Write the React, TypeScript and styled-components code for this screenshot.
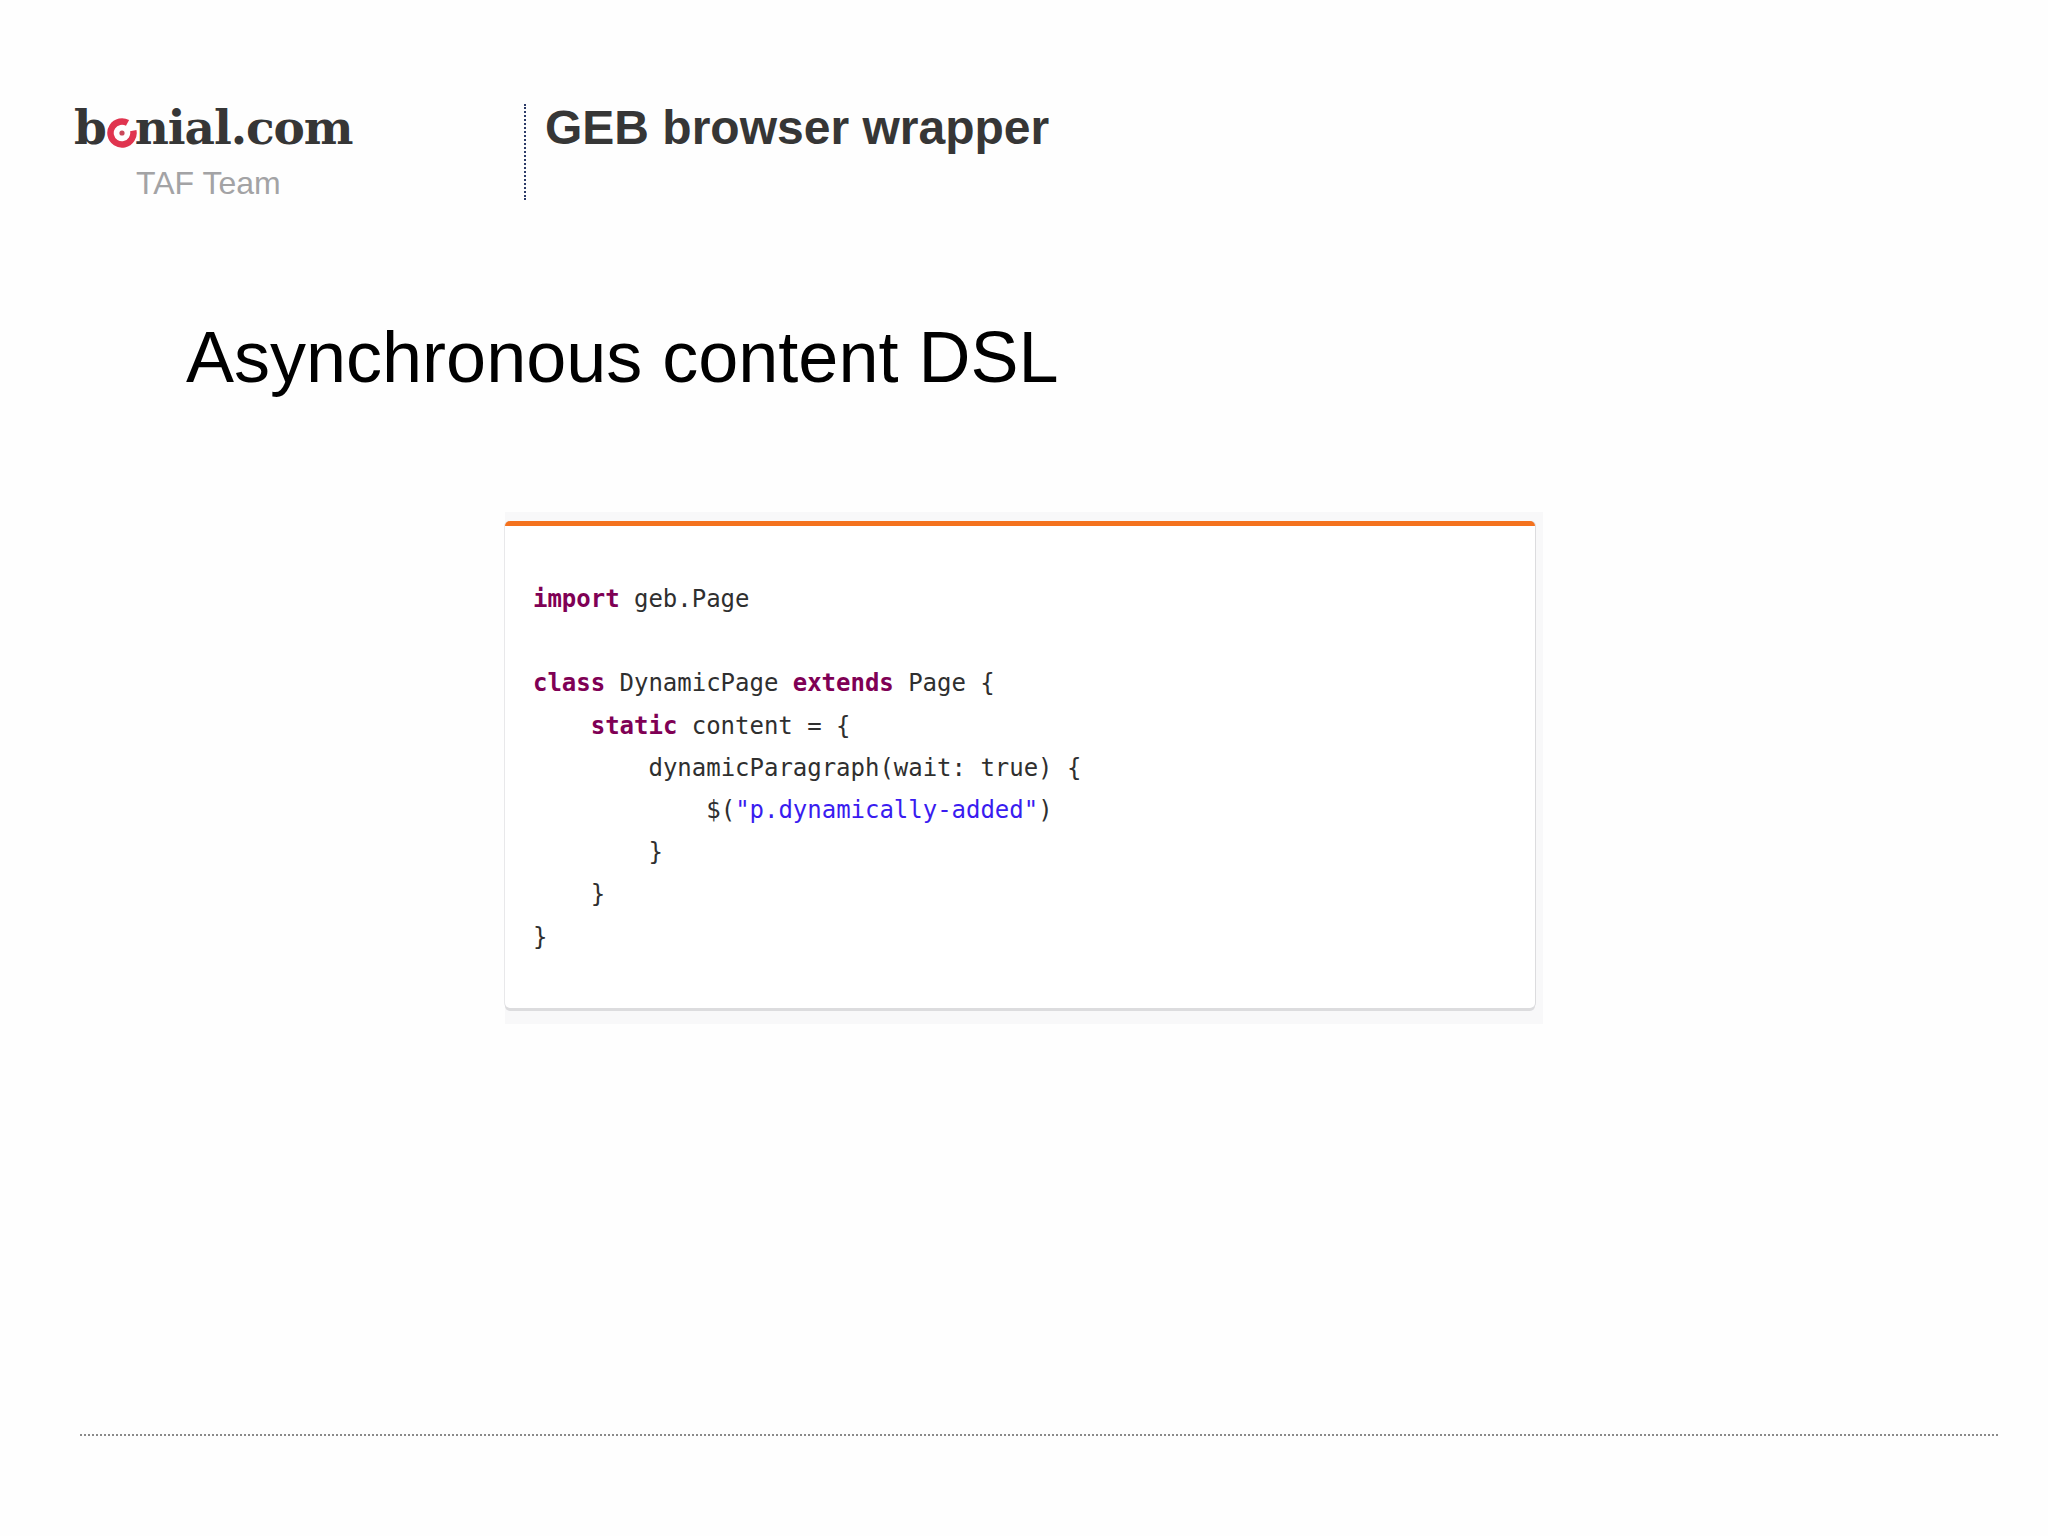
import styled, { createGlobalStyle } from 'styled-components'

const GlobalStyle = createGlobalStyle`
  html, body {
    margin: 0;
    padding: 0;
    background: #fefefe;
  }
`

const Slide = styled.div`
  width: 2048px;
  height: 1536px;
  display: flex;
  flex-direction: column;
  overflow: hidden;
  font-family: "Liberation Sans", Arial, sans-serif;
`

const Header = styled.header`
  display: flex;
  height: 96px;
  margin-top: 104px;
  padding-left: 74px;
`

const Brand = styled.div`
  width: 450px;
  flex: none;
  display: flex;
  flex-direction: column;
`

const Logo = styled.div`
  display: flex;
  align-items: baseline;
  height: 48px;
  font-family: "DejaVu Serif", serif;
  font-weight: 700;
  font-size: 47px;
  line-height: 48px;
  letter-spacing: -1.1px;
  color: #363636;
`

const LogoMark = styled.svg`
  width: 30px;
  height: 30px;
  margin: 0 -2px 4px 1px;
  align-self: flex-end;
  flex: none;
`

const Team = styled.div`
  margin: 13px 0 0 62px;
  font-size: 32px;
  line-height: 36px;
  color: #a3a3a5;
`

const DeckTitle = styled.h2`
  margin: 0;
  padding: 1px 0 0 19px;
  height: 100%;
  box-sizing: border-box;
  border-left: 2px dotted #2b3a67;
  font-size: 48px;
  line-height: 46px;
  font-weight: 700;
  color: #363636;
`

const Heading = styled.h1`
  margin: 115px 0 0 186px;
  font-size: 72px;
  line-height: 84px;
  font-weight: 400;
  color: #000;
`

const CodeHalo = styled.div`
  align-self: flex-start;
  margin: 113px 0 0 505px;
  padding: 9px 8px 16px 0;
  background: #f8f8f9;
`

const CodeCard = styled.div`
  width: 1030px;
  height: 487px;
  box-sizing: border-box;
  padding: 52px 0 0 28px;
  background: #fff;
  border-top: 5px solid #f4721e;
  border-radius: 5px;
  box-shadow: 1px 0 0 #dcdcde, 0 3px 0 #dcdcde, -1px 0 0 #e8e8ea;
`

const Code = styled.div`
  font-family: "DejaVu Sans Mono", "Liberation Mono", monospace;
  font-size: 24px;
  line-height: 42.2px;
  letter-spacing: -0.02px;
  color: #2f2f2f;
`

const CodeLine = styled.div<{ $indent?: number }>`
  height: 42.2px;
  padding-left: ${p => (p.$indent ?? 0) * 14.44}px;
  white-space: pre;
`

const Keyword = styled.span`
  font-weight: 700;
  color: #7f0055;
`

const Str = styled.span`
  color: #3a1cf0;
`

const Footer = styled.div`
  margin: auto 50px 100px 80px;
  border-top: 2px dotted #8a8a8a;
`

const Target = () => (
  <LogoMark viewBox='0 0 30 30'>
    <circle cx='15' cy='15' r='11.5' fill='none' stroke='#e0344f' strokeWidth='6.5' strokeDasharray='62 10.3' transform='rotate(-12 15 15)' />
    <circle cx='15' cy='15' r='2.6' fill='#c9485a' />
  </LogoMark>
)

export default function App() {
  return <>
    <GlobalStyle />
    <Slide>
      <Header>
        <Brand>
          <Logo>b<Target />nial.com</Logo>
          <Team>TAF Team</Team>
        </Brand>
        <DeckTitle>GEB browser wrapper</DeckTitle>
      </Header>
      <Heading>Asynchronous content DSL</Heading>
      <CodeHalo>
        <CodeCard>
          <Code>
            <CodeLine><Keyword>import</Keyword> geb.Page</CodeLine>
            <CodeLine />
            <CodeLine><Keyword>class</Keyword> DynamicPage <Keyword>extends</Keyword> Page {'{'}</CodeLine>
            <CodeLine $indent={4}><Keyword>static</Keyword> content = {'{'}</CodeLine>
            <CodeLine $indent={8}>dynamicParagraph(wait: true) {'{'}</CodeLine>
            <CodeLine $indent={12}>$(<Str>"p.dynamically-added"</Str>)</CodeLine>
            <CodeLine $indent={8}>{'}'}</CodeLine>
            <CodeLine $indent={4}>{'}'}</CodeLine>
            <CodeLine>{'}'}</CodeLine>
          </Code>
        </CodeCard>
      </CodeHalo>
      <Footer />
    </Slide>
  </>
}
